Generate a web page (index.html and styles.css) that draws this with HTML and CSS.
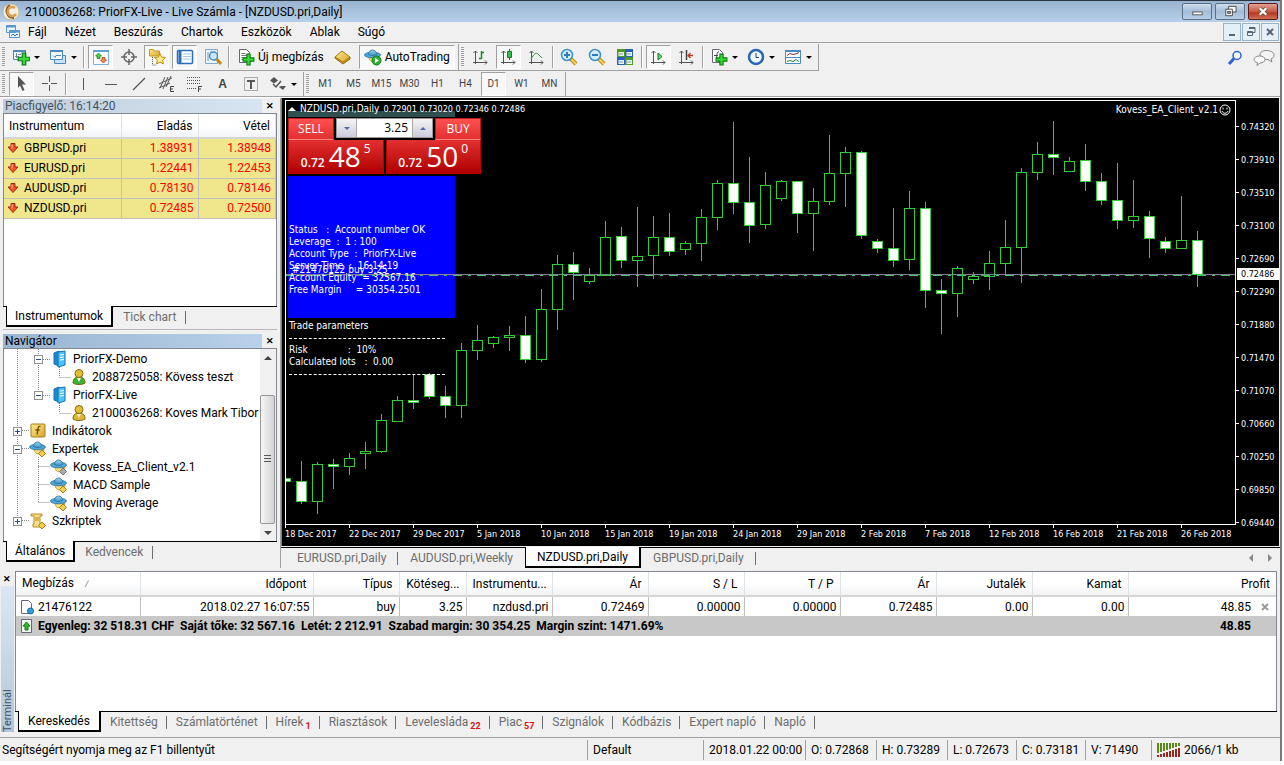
FILE: index.html
```html
<!DOCTYPE html>
<html lang="hu">
<head>
<meta charset="utf-8">
<title>2100036268: PriorFX-Live - Live Számla - [NZDUSD.pri,Daily]</title>
<link rel="stylesheet" href="styles.css">
</head>
<body>
<svg class="defs" aria-hidden="true">
  <defs>
    <linearGradient id="gold" x1="0" y1="0" x2="1" y2="1"><stop offset="0" stop-color="#ffe98a"/><stop offset="1" stop-color="#d8a52a"/></linearGradient>
    <linearGradient id="sky" x1="0" y1="0" x2="0" y2="1"><stop offset="0" stop-color="#9bd6f5"/><stop offset="1" stop-color="#3b95cc"/></linearGradient>
    <symbol id="plus" viewBox="0 0 12 12"><path d="M4.500 1h3v3.500H11v3H7.500V11h-3V7.500H1v-3h3.500z" fill="#35dd35" stroke="#0b7a12"/></symbol>
    <symbol id="hat" viewBox="0 0 18 18">
      <path d="M5 9c0 3 2 5 5 5s5-2 5-5z" fill="#f8df7a" stroke="#c59a2a" stroke-width=".8"/>
      <ellipse cx="8.500" cy="7" rx="8" ry="2.800" fill="#4fa8da" stroke="#2b6f9c" stroke-width=".8"/>
      <path d="M4.500 6.500c0-6 8-6 8 0-2 1.300-6 1.300-8 0z" fill="url(#sky)" stroke="#2b6f9c" stroke-width=".8"/>
    </symbol>
    <symbol id="server" viewBox="0 0 18 18"><path d="M4 3l5-2v15l-5-2z" fill="#1e86cc" stroke="#1273b5"/><path d="M8 2l7-1v14l-7 2z" fill="#4cc4f8" stroke="#1273b5"/><path d="M10 5l4-.5M10 7.500l4-.5M10 10l4-.5" stroke="#fff"/></symbol>
    <symbol id="person" viewBox="0 0 18 18"><path d="M3 15c0-5 3-6 6-6s6 1 6 6c-3 2-9 2-12 0z" fill="currentColor" stroke="#7a6a10"/><circle cx="9" cy="5.500" r="4" fill="#e5bd35" stroke="#8a6b12"/><path d="M7 10l2 4 2-4" fill="#fff6cf"/></symbol>
    <symbol id="down" viewBox="0 0 12 12"><path d="M4 1.500h4V5h3L6 10.500 1 5h3z" fill="#f0562a" stroke="#9c2a0c"/><path d="M5 2.500v4" stroke="#ffb08a"/></symbol>
    <symbol id="axes" viewBox="0 0 18 18"><path d="M4.500 3v13M2 14.500h14M2.500 5l2-2 2 2M14 12.500l2 2-2 2" fill="none" stroke="#555"/></symbol>
    <symbol id="lens" viewBox="0 0 18 18"><path d="M11 11l5 5" stroke="#b98c1a" stroke-width="4"/><path d="M11 11l5 5" stroke="#f7d45c" stroke-width="2"/><circle cx="7" cy="7" r="5.500" fill="#d5ecfb" stroke="#3d8fd0" stroke-width="1.500"/></symbol>
  </defs>
</svg>

<div class="app">
  <header class="titlebar">
    <svg class="i18" viewBox="0 0 18 18"><circle cx="9" cy="9" r="8" fill="#f5efe2" stroke="#cdbb96"/><path d="M8 2a7 7 0 0 0 4 13" fill="none" stroke="#8a5f28" stroke-width="2"/><path d="M13 5a4.500 4.500 0 1 0 1 6" fill="none" stroke="#d8a050" stroke-width="2.500"/></svg>
    <h1>2100036268: PriorFX-Live - Live Számla - [NZDUSD.pri,Daily]</h1>
    <div class="winbtns">
      <button aria-label="Kis méret"><svg viewBox="0 0 28 16"><rect x="9.500" y="8.500" width="10" height="3" fill="#fff" stroke="#555"/></svg></button>
      <button aria-label="Előző méret"><svg viewBox="0 0 28 16"><path d="M12.500 2.500h8v6h-8z" fill="#fff" stroke="#444"/><path d="M9.500 5.500h7v7h-7z" fill="#fff" stroke="#444"/><path d="M11.500 8h3v2h-3z" fill="#aac" stroke="#444"/></svg></button>
      <button class="close" aria-label="Bezárás"><svg viewBox="0 0 28 16"><path d="M10.500 4.500l7 7M17.500 4.500l-7 7" stroke="#543" stroke-width="4"/><path d="M10.500 4.500l7 7M17.500 4.500l-7 7" stroke="#fff" stroke-width="2.500"/></svg></button>
    </div>
  </header>

  <nav class="menubar">
    <svg class="i16" viewBox="0 0 16 16"><path d="M1.500 1.500h9v7h-9zM4.500 6.500h10v7h-10z" fill="#e8f3fc" stroke="#5b97cf"/><path d="M1 2.500h10M4 7.500h11" stroke="#5b97cf" stroke-width="2"/><path d="M6 12l2-2 2 2 2-2 1 1" fill="none" stroke="#3a79b8"/></svg>
    <a href="#">Fájl</a><a href="#">Nézet</a><a href="#">Beszúrás</a><a href="#">Chartok</a><a href="#">Eszközök</a><a href="#">Ablak</a><a href="#">Súgó</a>
    <div class="mdibtns">
      <button aria-label="Kis méret"><svg viewBox="0 0 16 16"><path d="M5 11h6" stroke="#567" stroke-width="2"/></svg></button>
      <button aria-label="Előző méret"><svg viewBox="0 0 16 16"><path d="M6 3.500h6v5h-2M4.500 7.500h5v4h-5zM6 4.500h6M4 8.500h6" fill="none" stroke="#567"/></svg></button>
      <button aria-label="Bezárás"><svg viewBox="0 0 16 16"><path d="M5 5l6 6M11 5l-6 6" stroke="#567" stroke-width="2"/></svg></button>
    </div>
  </nav>

  <div class="toolrow">
    <div class="toolbar">
      <span class="grip"></span>
      <button class="tb drop" aria-label="Új chart"><svg class="i18" viewBox="0 0 18 18"><path d="M1.500 2.500h12v9h-12z" fill="#f3f9ff" stroke="#4d88bd"/><path d="M1 3h13" stroke="#4d88bd" stroke-width="2"/><path d="M4.500 5v5M3 8.500h4M6 6.500h3" stroke="#789" fill="none"/><use href="#plus" x="5" y="4" width="14" height="14"/></svg></button>
      <button class="tb drop" aria-label="Profilok"><svg class="i18" viewBox="0 0 18 18"><path d="M5.500 7.500h11v8h-11z" fill="#c9e2f6" stroke="#4d88bd"/><path d="M1.500 2.500h12v9h-12z" fill="#f3f9ff" stroke="#4d88bd"/><path d="M1 3h13" stroke="#4d88bd" stroke-width="2"/><path d="M4 7.500l2 2 1-2h5" fill="none" stroke="#4d88bd"/></svg></button>
      <span class="sep"></span>
      <button class="tb on" aria-label="Piacfigyelő"><svg class="i18" viewBox="0 0 18 18"><path d="M1.500 2.500h15v14h-15z" fill="#fff" stroke="#7db2e0"/><path d="M1 3h16" stroke="#5d9fd6" stroke-width="2"/><path d="M6.500 5l3 3H8v2.500H5V8H3.500z" fill="#4cd04c" stroke="#127a12" stroke-width=".7"/><path d="M11.500 15l3-3H13V9.500h-3V12H8.500z" fill="#f58a5a" stroke="#b02c0c" stroke-width=".7"/></svg></button>
      <button class="tb" aria-label="Adatablak"><svg class="i18" viewBox="0 0 18 18"><circle cx="9" cy="9" r="5" fill="none" stroke="#666" stroke-width="1.500"/><path d="M9 1v6M9 11v6M1 9h6M11 9h6" stroke="#666" stroke-width="1.500"/></svg></button>
      <button class="tb on" aria-label="Navigátor"><svg class="i18" viewBox="0 0 18 18"><path d="M1.500 3V1.500h4l1 1.500h5v5h-10z" fill="url(#gold)" stroke="#c99a1e"/><path d="M4.500 9v8h4" fill="none" stroke="#555" stroke-dasharray="1 1"/><path d="M12 5.500l1.600 3.600 3.900.4-2.900 2.600.8 3.900-3.400-2-3.400 2 .8-3.900-2.900-2.600 3.900-.4z" fill="#ffec8a" stroke="#c08f10"/></svg></button>
      <button class="tb on" aria-label="Terminál"><svg class="i18" viewBox="0 0 18 18"><rect x="1.500" y="2.500" width="15" height="13" rx="1" fill="#fff" stroke="#2c6cb8" stroke-width="1.500"/><path d="M4 2v14" stroke="#2c6cb8" stroke-width="3"/><path d="M7 6h8M7 8.500h8M7 11h8" stroke="#aac6e0"/></svg></button>
      <button class="tb" aria-label="Stratégia tesztelő"><svg class="i18" viewBox="0 0 18 18"><path d="M1.500 1.500h12v14h-12z" fill="#eef6fd" stroke="#7aa9d2"/><path d="M4 4v9M7 3v8M11 4v9" stroke="#7b93a8"/><circle cx="9.500" cy="8" r="4" fill="#cfe7f8" stroke="#3d8fd0" stroke-width="1.500"/><path d="M12.500 11l4.500 5" stroke="#b98c1a" stroke-width="3"/></svg></button>
      <span class="sep"></span>
      <button class="tb text"><svg class="i18" viewBox="0 0 18 18"><path d="M2.500 1.500h7l3 3v10h-10z" fill="#fff" stroke="#667"/><path d="M4.500 5.500h4M4.500 7.500h6M4.500 9.500h4M4.500 11.500h3" stroke="#778"/><use href="#plus" x="5" y="5" width="13" height="13"/></svg><span>Új megbízás</span></button>
      <button class="tb" aria-label="MetaEditor"><svg class="i18" viewBox="0 0 18 18"><path d="M1 10l8 6 7-5v-2H1z" fill="#d79a1c" stroke="#8f640c"/><path d="M1 9l7-6 8 6-7 5z" fill="url(#gold)" stroke="#a87712"/></svg></button>
      <button class="tb on text"><svg class="i18" viewBox="0 0 18 18"><use href="#hat" x="0" y="0" width="18" height="18"/><circle cx="12.500" cy="12.500" r="4.500" fill="#2fae34" stroke="#137a1a"/><path d="M11 10l4 2.500-4 2.500z" fill="#fff"/></svg><span>AutoTrading</span></button>
    </div>
    <div class="toolbar">
      <span class="grip"></span>
      <button class="tb" aria-label="Oszlopdiagram"><svg class="i18" viewBox="0 0 18 18"><use href="#axes"/><path d="M10.500 3v8M10.500 4.500H13M8 10.500h2.500" stroke="#1b8a2a" fill="none" stroke-width="1.500"/></svg></button>
      <button class="tb on" aria-label="Gyertyák"><svg class="i18" viewBox="0 0 18 18"><use href="#axes"/><path d="M10.500 1v11" stroke="#127a20"/><path d="M8.500 3.500h4v6h-4z" fill="#39c24a" stroke="#127a20"/></svg></button>
      <button class="tb" aria-label="Vonaldiagram"><svg class="i18" viewBox="0 0 18 18"><use href="#axes"/><path d="M4 11c3-5 5-7 7-5l4 4" fill="none" stroke="#2e9a3e"/></svg></button>
      <span class="sep"></span>
      <button class="tb" aria-label="Nagyítás"><svg class="i18" viewBox="0 0 18 18"><use href="#lens"/><path d="M4 7h6M7 4v6" stroke="#2d7cc0" stroke-width="2"/></svg></button>
      <button class="tb" aria-label="Kicsinyítés"><svg class="i18" viewBox="0 0 18 18"><use href="#lens"/><path d="M4 7h6" stroke="#2d7cc0" stroke-width="2"/></svg></button>
      <button class="tb" aria-label="Mozaik"><svg class="i18" viewBox="0 0 18 18"><path d="M1 1h8v8H1z" fill="#4f9c25"/><path d="M9 1h8v8H9z" fill="#2c5fc0"/><path d="M1 9h8v8H1z" fill="#2c5fc0"/><path d="M9 9h8v8H9z" fill="#4f9c25"/><path d="M2.500 4h5.500v4H2.500zM10.500 4H16v4h-5.500zM2.500 12h5.500v4H2.500zM10.500 12H16v4h-5.500z" fill="#e9f2fa"/><path d="M3 6h4M11 6h4M3 14h4M11 14h4" stroke="#7a9"/></svg></button>
      <span class="sep"></span>
      <button class="tb on" aria-label="Automatikus görgetés"><svg class="i18" viewBox="0 0 18 18"><use href="#axes"/><path d="M9 5l4 3.500L9 12z" fill="#6fd47a" stroke="#127a20"/></svg></button>
      <button class="tb" aria-label="Chart eltolás"><svg class="i18" viewBox="0 0 18 18"><use href="#axes"/><path d="M9.500 2v10" stroke="#444" stroke-width="1.500"/><path d="M11 7.500h5M13.500 5L11 7.500l2.500 2.500" stroke="#c0391b" fill="none" stroke-width="1.300"/></svg></button>
      <span class="sep"></span>
      <button class="tb drop" aria-label="Indikátorok"><svg class="i18" viewBox="0 0 18 18"><path d="M2.500 1.500h7l3 3v10h-10z" fill="#fff" stroke="#667"/><path d="M9 4c-2-1-2 1-2.500 9M4 7.500h4" fill="none" stroke="#445"/><use href="#plus" x="5" y="5" width="13" height="13"/></svg></button>
      <button class="tb drop" aria-label="Periódusok"><svg class="i18" viewBox="0 0 18 18"><circle cx="9" cy="9" r="7" fill="#eef6ff" stroke="#2567b5" stroke-width="2.500"/><path d="M9 5v4.500h3" fill="none" stroke="#345"/></svg></button>
      <button class="tb drop" aria-label="Sablonok"><svg class="i18" viewBox="0 0 18 18"><path d="M1.500 2.500h15v13h-15z" fill="#f6fbff" stroke="#4d88bd"/><path d="M1 3h16" stroke="#4d88bd" stroke-width="2"/><path d="M2 9.500h14" stroke="#4d88bd"/><path d="M3 7.500l3-2 3 1 4-1 2-1" fill="none" stroke="#833"/><path d="M3 13.500l3-1 3 1 3-2 3 2" fill="none" stroke="#2a8a3a"/></svg></button>
    </div>
    <div class="toolright">
      <button class="tb" aria-label="Keresés"><svg class="i18" viewBox="0 0 18 18"><circle cx="11" cy="6.500" r="4" fill="#f3f8ff" stroke="#2f62cc" stroke-width="1.500"/><path d="M8 9.500L3 15" stroke="#2f62cc" stroke-width="3"/></svg></button>
      <button class="tb" aria-label="Chat"><svg class="chat" viewBox="0 0 22 18"><path d="M13 1.500c5 0 8 2 8 4.500s-1 3-3 4l1 3-4-2.500c-5 0-8-1.500-8-4.500s3-4.500 6-4.500z" fill="#f4f4f4" stroke="#888"/><path d="M6.500 7c3.500 0 5.500 1.500 5.500 3.500S10 14 7 14l-3 2.500.5-3C2 13 1 12 1 10.500 1 8.500 3.500 7 6.500 7z" fill="#fff" stroke="#888"/></svg></button>
    </div>
  </div>

  <div class="toolrow second">
    <div class="toolbar">
      <span class="grip"></span>
      <button class="tb on" aria-label="Kurzor"><svg class="i18" viewBox="0 0 18 18"><path d="M5 1l8 8.500H9l2.500 5.500-2 1L7 10.500 5 13z" fill="#555"/></svg></button>
      <button class="tb" aria-label="Célkereszt"><svg class="i18" viewBox="0 0 18 18"><path d="M8.500 1v6M8.500 10v6M1 8.500h6M10 8.500h6" stroke="#555"/></svg></button>
      <span class="sep"></span>
      <button class="tb" aria-label="Függőleges vonal"><svg class="i18" viewBox="0 0 18 18"><path d="M9.500 3v12" stroke="#555"/></svg></button>
      <button class="tb" aria-label="Vízszintes vonal"><svg class="i18" viewBox="0 0 18 18"><path d="M3 9.500h12" stroke="#555"/></svg></button>
      <button class="tb" aria-label="Trendvonal"><svg class="i18" viewBox="0 0 18 18"><path d="M3 15L15 3" stroke="#555" stroke-width="1.300"/></svg></button>
      <button class="tb" aria-label="Egyenközű csatorna"><svg class="i18" viewBox="0 0 18 18"><path d="M2 13L7 2M5 14l5-12M8 12l5-11M1 9l13-6M1 13l11-5" stroke="#555"/><path d="M16 11.500h-3.500v5H16M12.500 14H15" stroke="#444" fill="none"/></svg></button>
      <button class="tb" aria-label="Fibonacci"><svg class="i18" viewBox="0 0 18 18"><path d="M1 2.500h14M1 5.500h14M1 8.500h14M1 13.500h10" stroke="#555" stroke-dasharray="1 1"/><path d="M16 11.500h-3.500v5.500M12.500 14H15" stroke="#444" fill="none"/></svg></button>
      <button class="tb glyph" aria-label="Szöveg">A</button>
      <button class="tb" aria-label="Szövegcímke"><svg class="i18" viewBox="0 0 18 18"><path d="M2.500 2.500h13v13h-13z" fill="none" stroke="#666" stroke-dasharray="1 1"/><path d="M5 6h8M9 6v8" stroke="#555" stroke-width="2"/></svg></button>
      <button class="tb drop" aria-label="Nyilak"><svg class="i18" viewBox="0 0 18 18"><path d="M5 2l4 3.500-4 3-4-3zM12 11h5l-3 4-4-3z" fill="#555"/><path d="M4 9l3 3 5-6" stroke="#555" fill="none" stroke-width="1.500"/></svg></button>
    </div>
    <div class="toolbar periods">
      <span class="grip"></span>
      <button class="tb">M1</button><button class="tb">M5</button><button class="tb">M15</button><button class="tb">M30</button><button class="tb">H1</button><button class="tb">H4</button><button class="tb on">D1</button><button class="tb">W1</button><button class="tb">MN</button>
    </div>
  </div>

  <main class="work">
    <aside class="side">
      <section class="panel watch">
        <div class="caption dim"><h2>Piacfigyelő: 16:14:20</h2><button class="x" aria-label="Bezárás">✕</button></div>
        <div class="frame">
          <table class="quotes">
            <thead><tr><th>Instrumentum</th><th>Eladás</th><th>Vétel</th></tr></thead>
            <tbody>
              <tr><td><svg viewBox="0 0 12 12"><use href="#down"/></svg>GBPUSD.pri</td><td>1.38931</td><td>1.38948</td></tr>
              <tr><td><svg viewBox="0 0 12 12"><use href="#down"/></svg>EURUSD.pri</td><td>1.22441</td><td>1.22453</td></tr>
              <tr><td><svg viewBox="0 0 12 12"><use href="#down"/></svg>AUDUSD.pri</td><td>0.78130</td><td>0.78146</td></tr>
              <tr><td><svg viewBox="0 0 12 12"><use href="#down"/></svg>NZDUSD.pri</td><td>0.72485</td><td>0.72500</td></tr>
            </tbody>
          </table>
        </div>
        <div class="tabs"><button class="tab sel">Instrumentumok</button><button class="tab">Tick chart</button></div>
      </section>

      <section class="panel navi">
        <div class="caption"><h2>Navigátor</h2><button class="x" aria-label="Bezárás">✕</button></div>
        <div class="frame treeframe">
          <div class="tree">
            <svg class="guides" viewBox="0 0 110 180"><path d="M13.500 0v171M34.500 0v45M39 10.500h7M39 46.500h7M55.500 18v10M55.500 28.500h11M55.500 54v10M55.500 64.500h11M18 81.500h7M18 99.500h7M18 171.500h7M34.500 108v45M34.500 117.500h11M34.500 135.500h11M34.500 153.500h11" fill="none" stroke="#888" stroke-dasharray="1 1"/></svg>
            <ul>
              <li class="l2"><button class="ex" aria-label="Összecsukás"></button><svg class="i18"><use href="#server"/></svg>PriorFX-Demo</li>
              <li class="l3"><svg class="i18 green"><use href="#person"/></svg>2088725058: Kövess teszt</li>
              <li class="l2"><button class="ex" aria-label="Összecsukás"></button><svg class="i18"><use href="#server"/></svg>PriorFX-Live</li>
              <li class="l3"><svg class="i18 gold"><use href="#person"/></svg>2100036268: Koves Mark Tibor</li>
              <li class="l1"><button class="ex plus" aria-label="Kibontás"></button><svg class="i18" viewBox="0 0 18 18"><rect x="2" y="2" width="14" height="13" rx="1" fill="url(#gold)" stroke="#a87e18"/><path d="M11.500 4.500c-3-1-2 2-3.500 8M6.500 8h4" fill="none" stroke="#6b4c08" stroke-width="1.300"/></svg>Indikátorok</li>
              <li class="l1"><button class="ex" aria-label="Összecsukás"></button><svg class="i18" viewBox="0 0 18 18"><use href="#hat"/><path d="M13 10l3.500 3.500-3.500 3.500-3.500-3.500z" fill="#f3cd50" stroke="#a87e18"/></svg>Expertek</li>
              <li class="l2c"><svg class="i18" viewBox="0 0 18 18"><use href="#hat"/><path d="M13 10l3.500 3.500-3.500 3.500-3.500-3.500z" fill="#aaa" stroke="#777"/></svg>Kovess_EA_Client_v2.1</li>
              <li class="l2c"><svg class="i18" viewBox="0 0 18 18"><use href="#hat"/><path d="M13 10l3.500 3.500-3.500 3.500-3.500-3.500z" fill="#f3cd50" stroke="#a87e18"/></svg>MACD Sample</li>
              <li class="l2c"><svg class="i18" viewBox="0 0 18 18"><use href="#hat"/><path d="M13 10l3.500 3.500-3.500 3.500-3.500-3.500z" fill="#f3cd50" stroke="#a87e18"/></svg>Moving Average</li>
              <li class="l1"><button class="ex plus" aria-label="Kibontás"></button><svg class="i18" viewBox="0 0 18 18"><path d="M2 2h11v2h-2v8h3v3H4v-3h1V4H2z" fill="#fbe08a" stroke="#b98c1a"/><path d="M6 6h4M6 8h4" stroke="#b98c1a"/><path d="M13 10l3.500 3.500-3.500 3.500-3.500-3.500z" fill="#f3cd50" stroke="#a87e18"/></svg>Szkriptek</li>
            </ul>
          </div>
          <div class="scroll">
            <button aria-label="Fel"><svg viewBox="0 0 8 4"><path d="M0 4l4-4 4 4z" fill="#444"/></svg></button>
            <div class="track"><div class="thumb"></div></div>
            <button aria-label="Le"><svg viewBox="0 0 8 4"><path d="M0 0h8L4 4z" fill="#444"/></svg></button>
          </div>
        </div>
        <div class="tabs"><button class="tab sel">Általános</button><button class="tab">Kedvencek</button></div>
      </section>
    </aside>

    <section class="mdi">
      <div class="chart">
        <div class="plot">
          <div class="teal"></div>
          <div class="blue"></div>
          <svg class="candles" id="candles" viewBox="286 101 949 423" width="949" height="423"></svg>
          <pre class="comment">Status   :  Account number OK
Leverage  :  1 : 100
Account Type  :  PriorFX-Live
Server Time  :  16:14:19
Account Equity  = 32567.16
Free Margin     = 30354.2501


Trade parameters
<span class="rule"></span>
Risk              :  10%
Calculated lots   :  0.00
<span class="rule"></span></pre>
          <div class="order">#21476122 buy 3.25</div>
          <div class="symbol"><svg viewBox="0 0 8 4"><path d="M0 4l4-4 4 4z" fill="#fff"/></svg><span>NZDUSD.pri,Daily</span><span class="ohlc">0.72901 0.73020 0.72346 0.72486</span></div>
          <div class="expert">Kovess_EA_Client_v2.1<svg viewBox="0 0 12 12"><circle cx="6" cy="6" r="5" fill="none" stroke="#fff"/><path d="M4 3.500v2M8 3.500v2M3 7c1 3 5 3 6 0" fill="none" stroke="#fff"/></svg></div>
          <div class="trade">
            <div class="deal">
              <button class="side-btn">SELL</button>
              <div class="vol"><button aria-label="Kevesebb"><svg viewBox="0 0 6 3"><path d="M0 0h6L3 3z" fill="#56a"/></svg></button><input aria-label="Kötésegység" value="3.25"><button aria-label="Több"><svg viewBox="0 0 6 3"><path d="M0 3l3-3 3 3z" fill="#56a"/></svg></button></div>
              <button class="side-btn">BUY</button>
            </div>
            <div class="prices">
              <button class="price"><small>0.72</small><b>48</b><sup>5</sup></button>
              <button class="price"><small>0.72</small><b>50</b><sup>0</sup></button>
            </div>
          </div>
        </div>
        <ol class="yaxis">
          <li>0.74320</li><li>0.73910</li><li>0.73510</li><li>0.73100</li><li>0.72690</li><li>0.72290</li><li>0.71880</li><li>0.71470</li><li>0.71070</li><li>0.70660</li><li>0.70250</li><li>0.69850</li><li>0.69440</li>
          <li class="now">0.72486</li>
        </ol>
        <ol class="xaxis">
          <li>18 Dec 2017</li><li>22 Dec 2017</li><li>29 Dec 2017</li><li>5 Jan 2018</li><li>10 Jan 2018</li><li>15 Jan 2018</li><li>19 Jan 2018</li><li>24 Jan 2018</li><li>29 Jan 2018</li><li>2 Feb 2018</li><li>7 Feb 2018</li><li>12 Feb 2018</li><li>16 Feb 2018</li><li>21 Feb 2018</li><li>26 Feb 2018</li>
        </ol>
      </div>
      <div class="tabs mditabs">
        <button class="tab">EURUSD.pri,Daily</button><button class="tab nosep">AUDUSD.pri,Weekly</button><button class="tab sel">NZDUSD.pri,Daily</button><button class="tab">GBPUSD.pri,Daily</button>
        <div class="arrows"><button aria-label="Balra"><svg viewBox="0 0 4 8"><path d="M4 0v8L0 4z" fill="#888"/></svg></button><button aria-label="Jobbra"><svg viewBox="0 0 4 8"><path d="M0 0v8l4-4z" fill="#888"/></svg></button></div>
      </div>
    </section>
  </main>

  <section class="terminal">
    <div class="strip"><button class="x" aria-label="Bezárás">✕</button><h2>Terminál</h2></div>
    <div class="termbody">
      <div class="frame">
        <table class="orders">
          <colgroup><col class="c124"><col class="c173"><col class="c86"><col class="c67"><col class="c86"><col class="c96"><col class="c96"><col class="c96"><col class="c96"><col class="c96"><col class="c96"><col></colgroup>
          <thead><tr><th>Megbízás <i>∕</i></th><th>Időpont</th><th>Típus</th><th>Kötéseg...</th><th>Instrumentu...</th><th>Ár</th><th>S / L</th><th>T / P</th><th>Ár</th><th>Jutalék</th><th>Kamat</th><th>Profit</th></tr></thead>
          <tbody>
            <tr><td><svg viewBox="0 0 16 16"><path d="M2.500 1.500h7l3 3v10h-10z" fill="#fff" stroke="#667"/><circle cx="11.500" cy="12" r="3" fill="#2f9be0" stroke="#1867a5"/></svg>21476122</td><td>2018.02.27 16:07:55</td><td>buy</td><td>3.25</td><td>nzdusd.pri</td><td>0.72469</td><td>0.00000</td><td>0.00000</td><td>0.72485</td><td>0.00</td><td>0.00</td><td>48.85<button class="rowx" aria-label="Pozíció zárása"><svg viewBox="0 0 8 8"><path d="M1 1l6 6M7 1L1 7" stroke="#999" stroke-width="2"/></svg></button></td></tr>
            <tr class="sum"><td colspan="11"><svg viewBox="0 0 16 16"><path d="M2.500 1.500h10v13h-10z" fill="#f4f8f4" stroke="#667"/><path d="M7.500 4l3.500 4H9v4H6V8H4z" fill="#2eb82e" stroke="#127a12"/></svg>Egyenleg: 32 518.31 CHF&nbsp; Saját tőke: 32 567.16&nbsp; Letét: 2 212.91&nbsp; Szabad margin: 30 354.25&nbsp; Margin szint: 1471.69%</td><td>48.85</td></tr>
          </tbody>
        </table>
      </div>
      <div class="tabs termtabs">
        <button class="tab sel">Kereskedés</button><button class="tab">Kitettség</button><button class="tab">Számlatörténet</button><button class="tab">Hírek<sub>1</sub></button><button class="tab">Riasztások</button><button class="tab">Levelesláda<sub>22</sub></button><button class="tab">Piac<sub>57</sub></button><button class="tab">Szignálok</button><button class="tab">Kódbázis</button><button class="tab">Expert napló</button><button class="tab">Napló</button>
      </div>
    </div>
  </section>

  <footer class="status">
    <span class="help">Segítségért nyomja meg az F1 billentyűt</span>
    <span class="s-prof">Default</span><span class="s-time">2018.01.22 00:00</span><span class="s-o">O: 0.72868</span><span class="s-o">H: 0.73289</span><span class="s-l">L: 0.72673</span><span class="s-l">C: 0.73181</span><span class="s-v">V: 71490</span>
    <span class="s-net"><svg viewBox="0 0 24 14"><path d="M1 0v10M4 0v9M7 0v8M10 0v7M13 0v6M16 0v5M19 0v4M22 0v3" stroke="#5b8a1c" stroke-width="2"/><path d="M1 12v2M4 11v3M7 10v4M10 9v5M13 8v6M16 7v7M19 6v8M22 5v9" stroke="#98281c" stroke-width="2"/></svg>2066/1 kb</span>
  </footer>
</div>
<script src="chart.js"></script>
</body>
</html>
```

FILE: styles.css
```css
* { box-sizing: border-box; }
body {
  margin: 0;
  background: #fff;
  color: #000;
  font: 12px/16px Roboto, "Open Sans", sans-serif;
}
button, input { font: inherit; color: inherit; }
button { padding: 0; border: 0; background: none; }
h1, h2, ul, ol, pre { margin: 0; padding: 0; font: inherit; list-style: none; }
table { border-collapse: collapse; table-layout: fixed; width: 100%; }
.defs { position: absolute; width: 0; height: 0; }
.i18 { width: 18px; height: 18px; flex: none; }
.i16 { width: 16px; height: 16px; flex: none; }

.app {
  display: flex;
  flex-direction: column;
  min-height: calc(100vh - 4px);
  margin: 0 2px 4px 0;
  border-right: 2px solid #7a7a7a;
  background: #f0f0f0;
}

/* Title and menu */
.titlebar {
  display: flex;
  align-items: center;
  gap: 5px;
  height: 22px;
  padding-left: 2px;
  border-top: 1px solid #2c3440;
  background: linear-gradient(#98b3d0, #b8d0e9);
}
.titlebar h1 { flex: 1; white-space: nowrap; }
.winbtns { display: flex; gap: 3px; padding-right: 2px; }
.winbtns button {
  width: 30px;
  height: 17px;
  border: 1px solid #5c6f84;
  border-radius: 2px;
  background: linear-gradient(#cfdeed, #a4bdd8 50%, #b9cfe6);
}
.winbtns .close { border-color: #5f1a14; background: linear-gradient(#e0a195, #c75a45 50%, #b53922 60%, #d0705a); }
.winbtns svg { display: block; width: 28px; height: 15px; }
.menubar {
  display: flex;
  align-items: center;
  gap: 18px;
  height: 21px;
  padding-left: 5px;
  border-bottom: 1px solid #a0a0a0;
}
.menubar a { color: #000; text-decoration: none; }
.menubar .i16 { margin-right: -11px; }
.mdibtns { display: flex; gap: 1px; margin-left: auto; padding-right: 1px; }
.mdibtns button { width: 18px; height: 18px; border: 1px solid #98b4c8; background: #e4f0f8; }
.mdibtns svg { display: block; width: 16px; height: 16px; }

/* Toolbars */
.toolrow { display: flex; height: 28px; padding-top: 1px; }
.toolrow.second { height: 26px; border-bottom: 1px solid #a0a0a0; }
.toolbar {
  display: flex;
  align-items: center;
  gap: 3px;
  padding: 0 3px 0 2px;
  border-right: 1px solid #a0a0a0;
  border-bottom: 1px solid #a0a0a0;
}
.second .toolbar { border-bottom: 0; }
.grip {
  width: 3px;
  height: 20px;
  margin-right: 1px;
  background: repeating-linear-gradient(#a0a0a0 0 1px, #f0f0f0 1px 2px);
}
.sep { width: 2px; height: 22px; border-left: 1px solid #a0a0a0; background: #fff; }
.tb {
  display: flex;
  align-items: center;
  justify-content: center;
  width: 25px;
  height: 24px;
  color: #444;
}
.tb.on { border: 1px solid; border-color: #a0a0a0 #fff #fff #a0a0a0; background: #f8f8f8; }
.tb.drop { width: 34px; justify-content: flex-start; gap: 4px; padding-left: 3px; }
.tb.drop::after { content: ""; border: 3px solid transparent; border-top: 3px solid #000; border-bottom: 0; }
.tb.text { width: auto; min-width: 92px; gap: 3px; padding: 0 4px; color: #000; white-space: nowrap; }
.tb.glyph { font: bold 12px/16px "Liberation Sans", sans-serif; }
.periods .tb { font-size: 10px; }
.toolright { display: flex; gap: 4px; align-items: center; margin-left: auto; padding-right: 4px; }
.chat { width: 22px; height: 18px; }

/* Work area */
.work { display: flex; border-top: 1px solid #fff; }
.side { display: flex; flex-direction: column; flex: none; width: 281px; border-right: 1px solid #a0a0a0; }
.panel { display: flex; flex-direction: column; margin: 0 3px; }
.watch { height: 232px; padding-bottom: 2px; border-bottom: 1px solid #b8b8b8; }
.navi { flex: 1; padding: 3px 0 6px; }
.caption { display: flex; align-items: center; height: 15px; }
.caption h2 { flex: 1; height: 14px; padding-left: 2px; line-height: 14px; background: linear-gradient(90deg, #98b4d1, #b9d1ea); }
.caption.dim h2 { color: #43535f; background: linear-gradient(90deg, #bfcddb, #d7e4f2); }
.x { width: 15px; font-weight: bold; font-size: 9px; line-height: 12px; color: #000; }
.frame { flex: 1; border: 1px solid #828790; border-bottom: 0; background: #fff; }
.quotes th { height: 24px; padding: 0 5px; font-weight: normal; text-align: right; background: linear-gradient(#fff 50%, #f2f3f5); border-right: 1px solid #e0e3e8; border-bottom: 2px solid #d5d5d5; }
.quotes th:first-child { width: 117px; text-align: left; }
.quotes th:nth-child(2) { width: 77px; }
.quotes td { height: 20px; padding: 0 4px 0 3px; text-align: right; color: #f00; background: #f0e68c; border-right: 1px solid #c0c0c0; border-bottom: 1px solid #c0c0c0; }
.quotes td:first-child { text-align: left; color: #000; }
.quotes svg { width: 12px; height: 12px; margin-right: 5px; vertical-align: -2px; }

/* Tabs */
.tabs { display: flex; height: 21px; border-top: 1px solid #000; }
.tab { position: relative; display: flex; align-items: center; padding: 0 10px; color: #6d6d6d; white-space: nowrap; }
.tab::after { content: ""; position: absolute; right: 0; top: 4px; height: 13px; border-right: 1px solid #6d6d6d; }
.tab.nosep::after, .tab.sel::after { content: none; }
.tab.sel { margin: -1px 0 0 3px; padding: 0 8px; border: 1px solid #000; border-width: 0 2px 2px 1px; background: #fff; color: #000; }

/* Navigator tree */
.treeframe { display: flex; }
.tree { position: relative; flex: 1; min-width: 0; padding-top: 1px; }
.guides { position: absolute; left: 0; top: 0; width: 110px; height: 180px; }
.tree ul { position: relative; }
.tree li { display: flex; align-items: center; height: 18px; white-space: nowrap; }
.tree .i18 { margin-right: 5px; }
.l1 { padding-left: 9px; }
.l2 { padding-left: 30px; }
.l3 { padding-left: 66px; }
.tree .l3 .i18 { margin-right: 4px; }
.l2c { padding-left: 46px; }
.green { color: #35b53a; }
.gold { color: #e0b53a; }
.ex {
  width: 9px;
  height: 9px;
  margin-right: 7px;
  border: 1px solid #919191;
  background: linear-gradient(#2b4a8f, #2b4a8f) center / 5px 1px no-repeat, #fff;
}
.ex.plus { background: linear-gradient(#2b4a8f, #2b4a8f) center / 5px 1px no-repeat, linear-gradient(#2b4a8f, #2b4a8f) center / 1px 5px no-repeat, #fff; }
.scroll { display: flex; flex-direction: column; flex: none; width: 16px; background: #f0f0f0; }
.scroll button { height: 17px; }
.scroll svg { width: 8px; height: 4px; vertical-align: middle; }
.track { display: flex; flex: 1; align-items: flex-end; }
.thumb {
  width: 15px;
  height: 129px;
  border: 1px solid #979797;
  border-radius: 2px;
  background: repeating-linear-gradient(#555 0 1px, transparent 1px 3px) center / 7px 9px no-repeat, linear-gradient(90deg, #f5f5f5, #d4d4d6);
}

/* Chart */
.mdi { display: flex; flex-direction: column; flex: 1; min-width: 0; }
.chart {
  display: grid;
  grid-template: 425px 21px / minmax(0, 1fr) 43px;
  margin-right: 1px;
  padding: 2px 0 0 3px;
  border-left: 1px solid #808080;
  background: #000;
  color: #fff;
  font: 10px/12px "DejaVu Sans Condensed", "Open Sans", sans-serif;
}
.plot { position: relative; border: 1px solid #fff; overflow: hidden; }
.candles { display: block; position: relative; }
.teal, .blue { position: absolute; left: 2px; width: 167px; }
.teal { top: 10px; height: 6px; background: #2f4f4f; }
.blue { top: 75px; height: 142px; background: #00f; }
.symbol { position: absolute; left: 2px; top: 2px; display: flex; align-items: baseline; gap: 4px; white-space: nowrap; }
.symbol svg { width: 8px; height: 4px; align-self: center; }
.ohlc { font-size: 9px; }
.expert { position: absolute; right: 4px; top: 3px; display: flex; align-items: center; gap: 1px; }
.expert svg { width: 12px; height: 12px; }
.comment { position: absolute; left: 3px; top: 123px; font: inherit; white-space: pre; }
.comment .rule { display: inline-block; width: 156px; height: 7px; border-bottom: 1px dashed #fff; vertical-align: top; }
.order { position: absolute; left: 6px; top: 163px; }
.trade {
  position: absolute;
  left: 2px;
  top: 17px;
  width: 193px;
  font: 12px/16px "Open Sans", sans-serif;
}
.deal, .prices { display: flex; gap: 2px; }
.deal { height: 22px; }
.side-btn { flex: none; width: 46px; background: linear-gradient(#ff5050, #e23030); border: 1px solid #c01818; border-bottom: 1px solid #ff8080; color: #fff; }
.vol { display: flex; flex: 1; min-width: 0; height: 20px; background: #fff; color: #000; border: 1px solid #999; }
.vol button { flex: none; width: 19px; background: linear-gradient(#f4f4f4, #ccd); }
.vol svg { display: block; width: 6px; height: 3px; margin: 0 auto; }
.vol input { flex: 1; width: 0; min-width: 0; padding: 0 4px; border: 1px solid #aaa; border-width: 0 1px; text-align: right; }
.price { display: flex; flex: 1; align-items: flex-end; justify-content: center; height: 34px; border: 1px solid #b00; border-top: 0; background: linear-gradient(#e23030, #b00000); }
.price small { font-size: 12px; line-height: 20px; font-weight: 600; }
.price b { margin: 0 3px 0 4px; font-weight: normal; font-size: 28px; line-height: 34px; }
.price sup { align-self: flex-start; font-size: 12px; line-height: 18px; }
.yaxis { grid-row: 1 / 3; grid-column: 2; position: relative; padding-top: 10px; font-size: 9px; }
.yaxis li { display: flex; align-items: center; gap: 2px; height: 33px; }
.yaxis li::before { content: ""; width: 3px; border-top: 1px solid #fff; }
.yaxis .now { position: absolute; left: 1px; right: 0; top: 168px; height: 12px; padding-left: 4px; background: #fff; color: #000; }
.yaxis .now::before { content: none; }
.xaxis { grid-row: 2; grid-column: 1; display: flex; font-size: 9px; }
.xaxis li { flex: none; width: 64px; white-space: nowrap; }
.xaxis li::before { content: ""; display: block; height: 3px; border-left: 1px solid #fff; }
.mditabs { margin-top: 1px; padding-left: 4px; }
.mditabs .tab { padding: 0 12px; }
.mditabs .tab.sel { margin-left: 0; padding: 0 11px; }
.arrows { display: flex; gap: 15px; align-items: center; margin-left: auto; padding-right: 8px; }
.arrows svg { display: block; width: 4px; height: 8px; }

/* Terminal */
.terminal { display: flex; flex: 1; margin-top: 3px; border-bottom: 1px solid #a0a0a0; padding-bottom: 5px; }
.strip { display: flex; flex-direction: column; width: 14px; flex: none; }
.strip .x { width: 14px; height: 15px; }
.strip h2 { flex: 1; width: 13px; margin-left: 1px; writing-mode: vertical-rl; transform: rotate(180deg); line-height: 13px; font-size: 11px; color: #43535f; background: linear-gradient(#b4c6d9, #dbe7f3); }
.termbody { display: flex; flex-direction: column; flex: 1; min-width: 0; margin: 0 3px 0 1px; }
.orders th { height: 24px; padding: 0 6px; font-weight: normal; text-align: right; white-space: nowrap; background: linear-gradient(#fff 50%, #f2f3f5); border-right: 1px solid #e0e3e8; border-bottom: 2px solid #d5d5d5; }
.orders th i { margin-left: 8px; font-size: 9px; color: #777; }
.orders td { height: 20px; padding: 0 3px; line-height: 14px; text-align: right; white-space: nowrap; border-right: 1px solid #c0c0c0; }
.orders tr > :first-child { text-align: left; }
.orders tr > :last-child { border-right: 0; }
.orders td svg { width: 16px; height: 16px; margin-right: 3px; vertical-align: -4px; }
.orders .sum td { font-weight: bold; background: #c8c8c8; border: 0; }
.orders .sum td:last-child { padding-right: 25px; }
.orders .rowx { margin: 0 3px 0 8px; width: 11px; line-height: 8px; }
.orders .rowx svg { width: 8px; height: 8px; margin: 0; vertical-align: baseline; }
.c124 { width: 124px; } .c173 { width: 173px; } .c86 { width: 86px; } .c67 { width: 67px; } .c96 { width: 96px; }
.termtabs .tab { padding: 0 9px; }
.tab sub { align-self: flex-end; margin-left: 2px; font-size: 9px; line-height: 12px; font-weight: bold; color: #e01010; }

/* Status bar */
.status { display: flex; align-items: center; height: 23px; white-space: nowrap; }
.status span { height: 20px; padding-left: 5px; border-left: 1px solid #a0a0a0; line-height: 20px; }
.status .help { flex: 1; padding-left: 2px; border: 0; }
.s-prof { width: 116px; }
.s-time { width: 102px; }
.s-o { width: 71px; }
.s-l { width: 69px; }
.s-v { width: 66px; }
.s-net { width: 129px; }
.s-net svg { width: 24px; height: 14px; margin-right: 3px; vertical-align: -3px; }
```

FILE: chart.js
```js
// One row per daily candle: high, body top, body bottom, low, filled (1 = bearish).
const candles = [
  [453,478,481,484,1],[461,481,501,503,1],[462,464,501,513,0],[459,464,466,488,1],[453,458,466,474,0],[442,451,453,468,0],
  [414,420,451,452,0],[396,400,421,421,0],[374,400,402,408,1],[373,374,396,398,1],[386,396,405,417,1],[343,350,405,417,0],
  [325,340,350,359,0],[336,337,343,347,0],[326,335,337,350,0],[316,335,359,362,1],[289,309,359,361,0],[255,264,309,329,0],
  [252,264,272,299,1],[268,275,281,283,0],[221,237,275,275,0],[227,236,260,267,1],[207,256,260,286,0],[216,237,255,278,0],
  [213,237,251,255,1],[241,243,249,254,0],[209,217,243,260,0],[180,183,217,229,0],[122,183,202,213,1],[157,202,225,242,1],
  [172,185,224,228,0],[180,181,198,200,0],[181,181,213,232,1],[188,201,213,250,0],[135,173,201,204,0],[147,152,173,206,0],
  [151,152,235,238,1],[239,241,248,252,1],[208,248,260,266,1],[191,208,259,269,0],[202,208,290,307,1],[279,290,293,333,1],
  [266,268,293,316,0],[272,276,279,283,0],[251,263,276,289,0],[220,247,263,275,0],[168,172,247,282,0],[142,154,172,179,0],
  [121,154,157,174,1],[157,161,171,171,0],[144,160,181,190,1],[173,181,200,204,1],[163,200,220,228,1],[180,216,220,227,0],
  [211,216,238,257,1],[237,241,248,252,1],[196,240,248,248,0],[231,240,274,286,1]
];
const step = 16;
const left = 285;
const parts = [
  '<path d="M285 274.5H1235" stroke="#80809a"/>',
  '<path d="M285 275.5H1235" stroke="#4ac46a" stroke-dasharray="9 6 3 6"/>'
];
candles.forEach(([high, top, bottom, low, filled], i) => {
  const x = left + i * step;
  parts.push(
    `<path d="M${x + 0.5} ${high}V${top}M${x + 0.5} ${bottom}V${low + 1}" stroke="#32cd32"/>`,
    `<rect x="${x - 4.5}" y="${top + 0.5}" width="10" height="${bottom - top}" fill="${filled ? '#fff' : 'none'}" stroke="#32cd32"/>`
  );
});
document.getElementById('candles').innerHTML = parts.join('');
```
